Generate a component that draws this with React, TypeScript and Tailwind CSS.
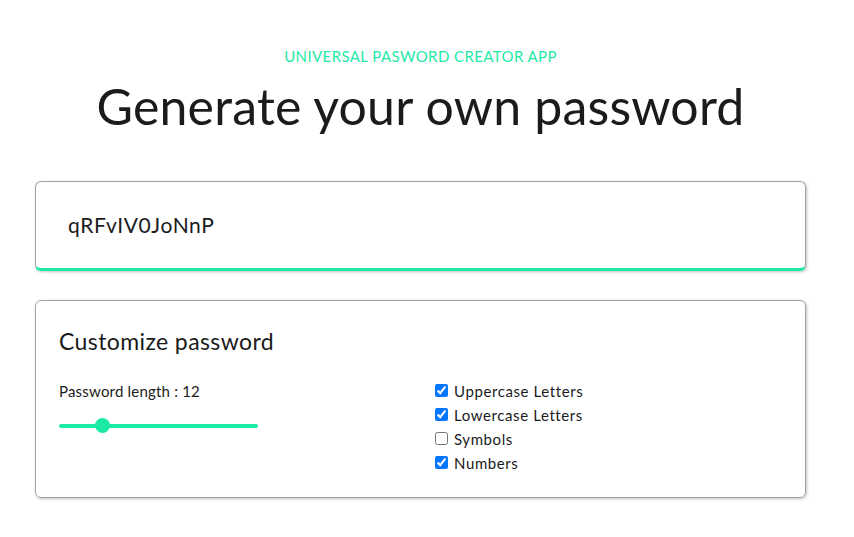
import { useState } from "react";

const options = [
  { label: "Uppercase Letters", on: true },
  { label: "Lowercase Letters", on: true },
  { label: "Symbols", on: false },
  { label: "Numbers", on: true },
];

export default function App() {
  const [length, setLength] = useState(12);
  const [checks, setChecks] = useState(options.map((o) => o.on));

  return (
    <div className="min-h-screen bg-white text-[#1b1b1b] font-['Lato',sans-serif]">
      <div className="w-[841px] pt-[45px]">
        <header className="text-center">
          <p className="text-[15px] tracking-[0.4px] text-[#1de9a6] uppercase">Universal Pasword Creator App</p>
          <h1 className="mt-[9px] text-[50px] leading-[58px] font-normal tracking-[0.2px]">Generate your own password</h1>
        </header>

        <main className="w-[771px] mx-auto mt-[46px] flex flex-col gap-[29px]">
          {/* output */}
          <div className="h-[90px] rounded-md border border-[#a3a3a3] border-b-[3px] border-b-[#1de9a6] shadow-[1px_1px_3px_rgba(0,0,0,0.25)] flex items-center px-[32px]">
            <span className="text-[21px] tracking-[0.6px]">qRFvIV0JoNnP</span>
          </div>

          {/* options */}
          <div className="h-[198px] rounded-md border border-[#a3a3a3] shadow-[1px_1px_3px_rgba(0,0,0,0.25)] px-[23px] pt-[25px]">
            <h2 className="text-[23px] leading-[30px] tracking-[0.4px]">Customize password</h2>
            <div className="grid grid-cols-[372px_1fr] mt-[23px]">
              <div>
                <p className="text-[15px] leading-[24px] tracking-[0.2px]">Password length : {length}</p>
                <input
                  type="range"
                  min={6}
                  max={37}
                  value={length}
                  onChange={(e) => setLength(Number(e.target.value))}
                  className="block mt-[21px] w-[199px] h-[4px] rounded-full bg-[#1de9a6] appearance-none outline-none [&::-webkit-slider-thumb]:appearance-none [&::-webkit-slider-thumb]:w-[15px] [&::-webkit-slider-thumb]:h-[15px] [&::-webkit-slider-thumb]:rounded-full [&::-webkit-slider-thumb]:bg-[#1de9a6]"
                />
              </div>
              <div className="flex flex-col">
                {options.map((o, i) => (
                  <label key={o.label} className="flex items-center text-[15px] leading-[24px] tracking-[0.6px]">
                    <input
                      type="checkbox"
                      checked={checks[i]}
                      onChange={() => setChecks(checks.map((c, j) => (j === i ? !c : c)))}
                      className="ml-[4px] mr-[6px] w-[13px] h-[13px]"
                    />
                    {o.label}
                  </label>
                ))}
              </div>
            </div>
          </div>
        </main>
      </div>
    </div>
  );
}
